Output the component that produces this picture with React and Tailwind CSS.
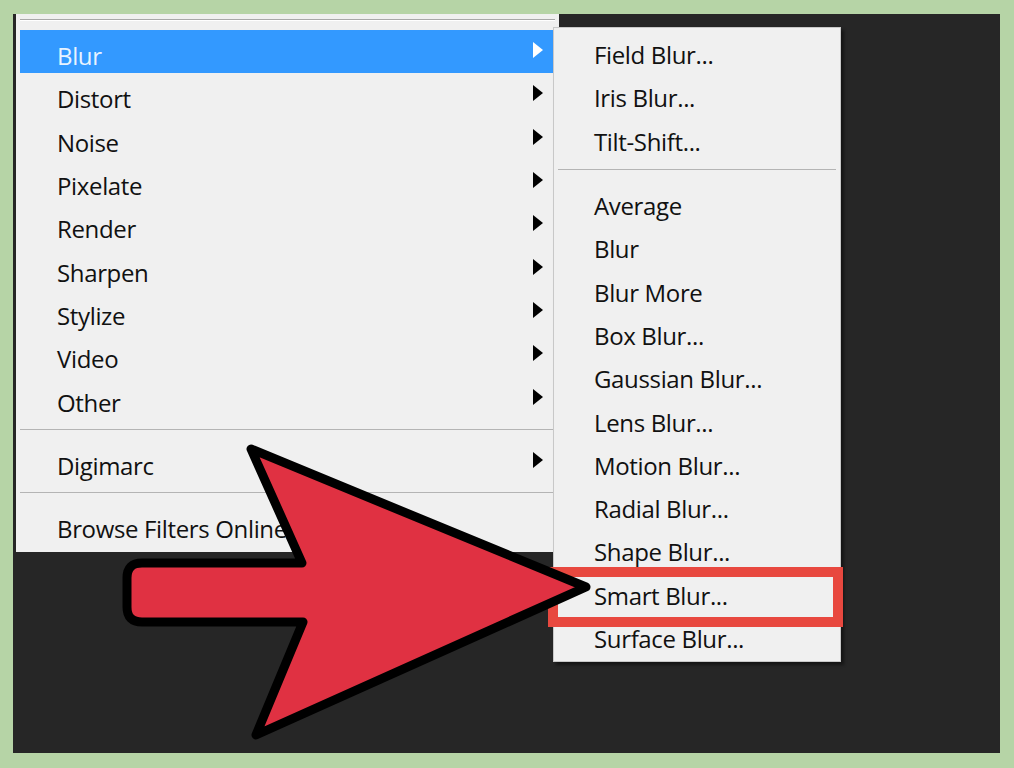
import React from "react";

const mainItems = [
  { label: "Blur", arrow: true, active: true },
  { label: "Distort", arrow: true },
  { label: "Noise", arrow: true },
  { label: "Pixelate", arrow: true },
  { label: "Render", arrow: true },
  { label: "Sharpen", arrow: true },
  { label: "Stylize", arrow: true },
  { label: "Video", arrow: true },
  { label: "Other", arrow: true },
];

const subTop = ["Field Blur...", "Iris Blur...", "Tilt-Shift..."];
const subBottom = [
  "Average",
  "Blur",
  "Blur More",
  "Box Blur...",
  "Gaussian Blur...",
  "Lens Blur...",
  "Motion Blur...",
  "Radial Blur...",
  "Shape Blur...",
  "Smart Blur...",
  "Surface Blur...",
];

function Tri({ white }) {
  return (
    <svg width="10" height="16" viewBox="0 0 10 16" className="shrink-0">
      <path d="M0 0 L10 8 L0 16 Z" fill={white ? "#ffffff" : "#000000"} />
    </svg>
  );
}

function MainRow({ label, arrow, active }) {
  return (
    <div
      className={`h-[43.3px] flex items-center justify-between pl-[37px] pr-[16px] ${
        active ? "bg-[#3399ff] text-[#e8f3ff]" : "text-[#111111]"
      }`}
    >
      <span className="pt-[9px]">{label}</span>
      {arrow && (
        <span className="pb-[3px]">
          <Tri white={active} />
        </span>
      )}
    </div>
  );
}

function SubRow({ label }) {
  return (
    <div className="h-[43.3px] flex items-center pl-[40px] text-[#111111]">
      <span className="pt-[9px]">{label}</span>
    </div>
  );
}

export default function App() {
  return (
    <div
      className="relative w-[1014px] h-[768px] bg-[#b6d4a6] pt-[14px] pl-[13px] pr-[14px] pb-[15px] overflow-hidden"
      style={{ fontFamily: '"Open Sans", "Noto Sans", sans-serif' }}
    >
      <div className="h-full bg-[#262626] flex items-start text-[24px] leading-none tracking-[-0.35px]">
        {/* Main menu */}
        <div className="ml-[3px] w-[543px] h-[538px] bg-[#f0f0f0] pt-[5px] shrink-0 relative z-0">
          <div className="mx-[4px] h-[2px] border-t border-[#a8a8a8] border-b-white bg-white" />
          <div className="mt-[9px] ml-[4px]">
            {mainItems.map((it) => (
              <MainRow key={it.label} {...it} />
            ))}
            <div className="my-[9.5px] mr-[4px] h-px bg-[#b4b4b4]" />
            <MainRow label="Digimarc" arrow />
            <div className="my-[9.5px] mr-[4px] h-px bg-[#b4b4b4]" />
            <MainRow label="Browse Filters Online..." />
          </div>
        </div>
        {/* Submenu */}
        <div className="-ml-[6px] mt-[13px] w-[288px] bg-[#f0f0f0] border border-[#c8c8c8] pt-[1px] pb-[5px] relative z-10 shadow-[3px_3px_3px_rgba(0,0,0,0.45)]">
          {subTop.map((l) => (
            <SubRow key={l} label={l} />
          ))}
          <div className="my-[10px] mx-[4px] h-px bg-[#b4b4b4]" />
          {subBottom.map((l) => (
            <SubRow key={l} label={l} />
          ))}
        </div>
      </div>

      {/* Red highlight box */}
      <div className="absolute left-[548px] top-[567px] w-[295px] h-[60px] border-[10px] border-[#e8483f] z-20" />

      {/* Red arrow */}
      <svg
        className="absolute left-0 top-0 z-30 pointer-events-none"
        width="1014"
        height="768"
        viewBox="0 0 1014 768"
      >
        <path
          d="M302 563 L251 449 L586 587 L256 735 L303 622 L142 622 Q127 622 127 607 L127 578 Q127 563 142 563 Z"
          fill="#e03142"
          stroke="#000000"
          strokeWidth="9"
          strokeLinejoin="round"
        />
      </svg>
    </div>
  );
}
